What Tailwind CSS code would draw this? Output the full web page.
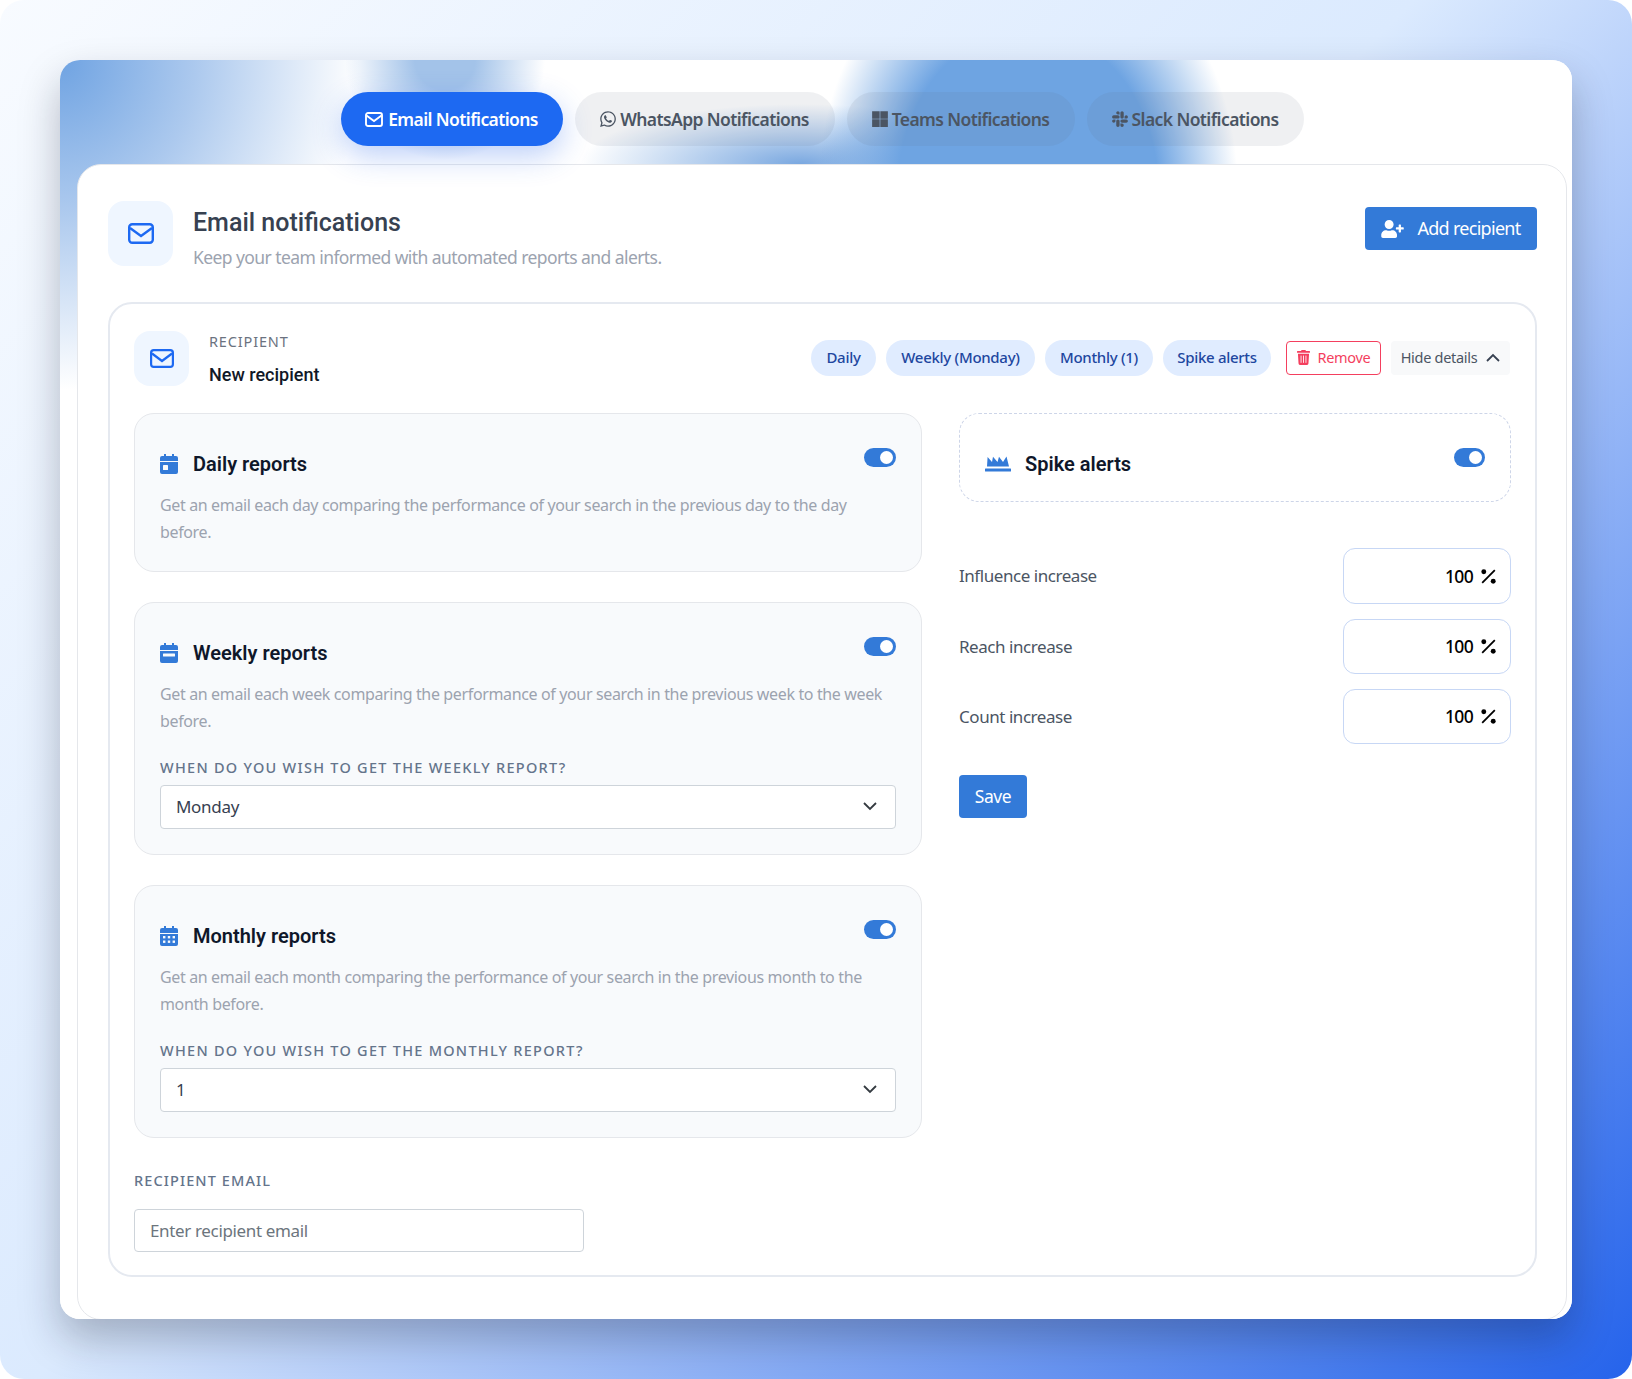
<!DOCTYPE html>
<html lang="en">
<head>
    <meta charset="UTF-8">
    <title>Email notifications</title>
    <script src="https://cdn.jsdelivr.net/npm/@tailwindcss/browser@4"></script>
</head>
<body class="bg-white font-['Noto_Sans',sans-serif] antialiased">
<div class="w-[1632px] h-[1379px] rounded-[24px] bg-[linear-gradient(135deg,#f8fbff_0%,#dbeafe_47%,#2563eb_100%)] p-[60px] pr-[60px]">

    <!-- Outer card -->
    <div class="relative w-[1512px] h-[1259px] rounded-[20px] bg-[#fbfbfb] overflow-hidden shadow-[0_20px_40px_rgba(15,23,42,0.28)] pl-[17px] pr-[5px] pt-[32px]">
        <!-- Header glow -->
        <div class="absolute inset-0 bg-[radial-gradient(ellipse_210px_260px_at_968px_130px,#6ea4e2_0%,#6ea4e2_62%,transparent_100%),radial-gradient(ellipse_220px_60px_at_740px_104px,#7aa8e0_0%,transparent_100%),radial-gradient(ellipse_100px_100px_at_385px_0px,#a3c3e9_0%,#a3c3e9_30%,transparent_100%),radial-gradient(ellipse_300px_330px_at_0px_0px,#6fa3e2_0%,#acc9ee_45%,transparent_100%),linear-gradient(#ffffff,#ffffff)]"></div>

        <!-- Tabs -->
        <div class="relative z-10 flex justify-center gap-[12px] h-[54px] text-[17.5px] font-semibold tracking-[-0.6px]">
            <div class="flex items-center gap-[5px] w-[222px] justify-center rounded-full bg-[#1d69f2] text-white shadow-[0_10px_30px_rgba(37,99,235,0.3)]">
                <svg class="w-[18px] h-[15px]" viewBox="0 0 18 15" fill="none" stroke="currentColor" stroke-width="1.9"><rect x="1" y="1" width="16" height="13" rx="2"/><path d="M1.5 3.5 9 9l7.5-5.5"/></svg>
                Email Notifications
            </div>
            <div class="flex items-center gap-[4px] w-[260px] justify-center rounded-full bg-[rgba(100,110,130,0.1)] text-[#4b5563]">
                <svg class="w-[16px] h-[18px]" viewBox="0 0 448 512" fill="currentColor"><path d="M380.9 97.1C339 55.1 283.2 32 223.9 32c-122.4 0-222 99.6-222 222 0 39.1 10.2 77.3 29.6 111L0 480l117.7-30.9c32.4 17.7 68.9 27 106.1 27h.1c122.3 0 224.1-99.6 224.1-222 0-59.3-25.2-115-67.1-157zm-157 341.6c-33.2 0-65.7-8.9-94-25.7l-6.7-4-69.8 18.3L72 359.2l-4.4-7c-18.5-29.4-28.2-63.3-28.2-98.2 0-101.7 82.8-184.5 184.6-184.5 49.3 0 95.6 19.2 130.4 54.1 34.8 34.9 56.2 81.2 56.1 130.5 0 101.8-84.9 184.6-186.6 184.6zm101.2-138.2c-5.5-2.8-32.8-16.2-37.9-18-5.1-1.9-8.8-2.8-12.5 2.8-3.7 5.6-14.3 18-17.6 21.8-3.2 3.7-6.5 4.2-12 1.4-32.6-16.3-54-29.1-75.5-66-5.7-9.8 5.7-9.1 16.3-30.3 1.8-3.7.9-6.9-.5-9.7-1.4-2.8-12.5-30.1-17.1-41.2-4.5-10.8-9.1-9.3-12.5-9.5-3.2-.2-6.9-.2-10.6-.2-3.7 0-9.7 1.4-14.8 6.9-5.1 5.6-19.4 19-19.4 46.3 0 27.3 19.9 53.7 22.6 57.4 2.8 3.7 39.1 59.7 94.8 83.8 35.2 15.2 49 16.5 66.6 13.9 10.7-1.6 32.8-13.4 37.4-26.4 4.6-13 4.6-24.1 3.2-26.4-1.3-2.5-5-3.9-10.5-6.6z"/></svg>
                WhatsApp Notifications
            </div>
            <div class="flex items-center gap-[4px] w-[228px] justify-center rounded-full bg-[rgba(100,110,130,0.1)] text-[#4b5563]">
                <svg class="w-[16px] h-[18px]" viewBox="0 0 448 512" fill="currentColor"><path d="M0 32h214.6v214.6H0V32zm233.4 0H448v214.6H233.4V32zM0 265.4h214.6V480H0V265.4zm233.4 0H448V480H233.4V265.4z"/></svg>
                Teams Notifications
            </div>
            <div class="flex items-center gap-[4px] w-[217px] justify-center rounded-full bg-[rgba(100,110,130,0.1)] text-[#4b5563]">
                <svg class="w-[16px] h-[18px]" viewBox="0 0 448 512" fill="currentColor"><path d="M94.12 315.1c0 25.9-21.16 47.06-47.06 47.06S0 341 0 315.1c0-25.9 21.16-47.06 47.06-47.06h47.06v47.06zm23.72 0c0-25.9 21.16-47.06 47.06-47.06s47.06 21.16 47.06 47.06v117.84c0 25.9-21.16 47.06-47.06 47.06s-47.06-21.16-47.06-47.06V315.1zm47.06-188.98c-25.9 0-47.06-21.16-47.06-47.06S139 32 164.9 32s47.06 21.16 47.06 47.06v47.06H164.9zm0 23.72c25.9 0 47.06 21.16 47.06 47.06s-21.16 47.06-47.06 47.06H47.06C21.16 243.96 0 222.8 0 196.9s21.16-47.06 47.06-47.06H164.9zm188.98 47.06c0-25.9 21.16-47.06 47.06-47.06 25.9 0 47.06 21.16 47.06 47.06s-21.16 47.06-47.06 47.06h-47.06V196.9zm-23.72 0c0 25.9-21.16 47.06-47.06 47.06-25.9 0-47.06-21.16-47.06-47.06V79.06c0-25.9 21.16-47.06 47.06-47.06 25.9 0 47.06 21.16 47.06 47.06V196.9zM283.1 385.88c25.9 0 47.06 21.16 47.06 47.06 0 25.9-21.16 47.06-47.06 47.06-25.9 0-47.06-21.16-47.06-47.06v-47.06h47.06zm0-23.72c-25.9 0-47.06-21.16-47.06-47.06 0-25.9 21.16-47.06 47.06-47.06h117.84c25.9 0 47.06 21.16 47.06 47.06 0 25.9-21.16 47.06-47.06 47.06H283.1z"/></svg>
                Slack Notifications
            </div>
        </div>

        <!-- Inner card -->
        <div class="relative mt-[18px] h-[1156px] rounded-[24px] bg-white border border-[#e5e7eb] pt-[36px] pl-[30px] pr-[29px]">

            <!-- Page header -->
            <div class="flex justify-between h-[65px]">
                <div class="flex gap-[20px]">
                    <div class="w-[65px] h-[65px] rounded-[16px] bg-[#eff6ff] flex items-center justify-center text-[#1d69f2]">
                        <svg class="w-[26px] h-[21px]" viewBox="0 0 26 21" fill="none" stroke="currentColor" stroke-width="2.4"><rect x="1.2" y="1.2" width="23.6" height="18.6" rx="3"/><path d="M2 5l11 8 11-8"/></svg>
                    </div>
                    <div>
                        <h1 class="font-['Roboto',sans-serif] text-[25px] leading-[34px] font-medium text-[#374151] mt-[5px]">Email notifications</h1>
                        <p class="text-[17.5px] leading-[26px] text-[#9ca3af] mt-[4px] tracking-[-0.58px]">Keep your team informed with automated reports and alerts.</p>
                    </div>
                </div>
                <button class="mt-[6px] w-[172px] h-[43px] rounded-[4px] bg-[#337ad8] text-white text-[18px] tracking-[-0.7px] flex items-center justify-center gap-[13px]">
                    <svg class="w-[23px] h-[18px]" viewBox="0 0 640 512" fill="currentColor"><path d="M624 208h-64v-64c0-8.8-7.2-16-16-16h-32c-8.8 0-16 7.2-16 16v64h-64c-8.8 0-16 7.2-16 16v32c0 8.8 7.2 16 16 16h64v64c0 8.8 7.2 16 16 16h32c8.8 0 16-7.2 16-16v-64h64c8.8 0 16-7.2 16-16v-32c0-8.8-7.2-16-16-16zm-400 48c70.7 0 128-57.3 128-128S294.7 0 224 0 96 57.3 96 128s57.3 128 128 128zm89.6 32h-16.7c-22.2 10.2-46.9 16-72.9 16s-50.6-5.8-72.9-16h-16.7C60.2 288 0 348.2 0 422.4V464c0 26.5 21.5 48 48 48h352c26.5 0 48-21.5 48-48v-41.6c0-74.2-60.2-134.4-134.4-134.4z"/></svg>
                    Add recipient
                </button>
            </div>

            <!-- Recipient card -->
            <div class="mt-[36px] h-[975px] rounded-[24px] border-2 border-[#e5e9f0] bg-white pt-[27px] pl-[24px] pr-[24px]">
                <div class="flex justify-between h-[55px]">
                    <div class="flex gap-[20px]">
                        <div class="w-[55px] h-[55px] rounded-[16px] bg-[#eff6ff] flex items-center justify-center text-[#1d69f2]">
                            <svg class="w-[24px] h-[19px]" viewBox="0 0 24 19" fill="none" stroke="currentColor" stroke-width="2.2"><rect x="1.1" y="1.1" width="21.8" height="16.8" rx="2.6"/><path d="M2 4.5l10 7.5 10-7.5"/></svg>
                        </div>
                        <div>
                            <div class="text-[14.5px] leading-[20px] tracking-[0.85px] text-[#6b7280]">RECIPIENT</div>
                            <div class="font-['Roboto',sans-serif] text-[18px] leading-[24px] font-medium text-[#111827] mt-[12px]">New recipient</div>
                        </div>
                    </div>
                    <div class="flex items-center h-[55px] mt-[-1px] mr-[1px] text-[15px] tracking-[-0.3px]">
                        <div class="flex items-center justify-center w-[65px] h-[36px] rounded-full bg-[#e0ecff] text-[#1e47a0] font-medium">Daily</div>
                        <div class="flex items-center justify-center w-[149px] h-[36px] rounded-full bg-[#e0ecff] text-[#1e47a0] font-medium ml-[10px]">Weekly (Monday)</div>
                        <div class="flex items-center justify-center w-[108px] h-[36px] rounded-full bg-[#e0ecff] text-[#1e47a0] font-medium ml-[10px]">Monthly (1)</div>
                        <div class="flex items-center justify-center w-[108px] h-[36px] rounded-full bg-[#e0ecff] text-[#1e47a0] font-medium ml-[10px]">Spike alerts</div>
                        <div class="flex items-center justify-center gap-[8px] w-[95px] h-[34px] rounded-[4px] border border-[#f43f5e] text-[#f43f5e] text-[14.5px] ml-[15px]">
                            <svg class="w-[13px] h-[15px]" viewBox="0 0 448 512" fill="currentColor"><path d="M432 32H312l-9.4-18.7A24 24 0 0 0 281.1 0H166.8a23.72 23.72 0 0 0-21.4 13.3L136 32H16A16 16 0 0 0 0 48v32a16 16 0 0 0 16 16h416a16 16 0 0 0 16-16V48a16 16 0 0 0-16-16zM53.2 467a48 48 0 0 0 47.9 45h245.8a48 48 0 0 0 47.9-45L416 128H32z"/><path d="M140 190v250M224 190v250M308 190v250" stroke="#fff" stroke-width="30"/></svg>
                            Remove
                        </div>
                        <div class="flex items-center justify-center gap-[9px] w-[119px] h-[34px] rounded-[4px] bg-[#f8f9fa] text-[#4b5563] text-[14.5px] ml-[10px]">
                            Hide details
                            <svg class="w-[14px] h-[9px]" viewBox="0 0 14 9" fill="none" stroke="#374151" stroke-width="1.8"><path d="M1 8l6-6 6 6"/></svg>
                        </div>
                    </div>
                </div>

                <div class="grid grid-cols-[788px_552px] gap-x-[37px] mt-[27px]">
                    <!-- Left column -->
                    <div class="flex flex-col gap-[30px]">
                        <!-- Daily -->
                        <div class="rounded-[20px] border border-[#e5e7eb] bg-[#f8fafc] px-[25px] pt-[34px] pb-[25px]">
                            <div class="flex justify-between h-[32px]">
                                <div class="flex items-center gap-[15px]">
                                    <svg class="w-[18px] h-[20px] text-[#337ad8]" viewBox="0 0 18 20" fill="currentColor"><path d="M4 0h2v3H4zM12 0h2v3h-2z"/><path d="M2 2h14a2 2 0 0 1 2 2v3H0V4a2 2 0 0 1 2-2zM0 8h18v10a2 2 0 0 1-2 2H2a2 2 0 0 1-2-2z"/><rect x="3" y="11" width="5" height="5" rx=".6" fill="#f8fafc"/></svg>
                                    <h3 class="font-['Roboto',sans-serif] text-[20px] font-semibold text-[#0f172a]">Daily reports</h3>
                                </div>
                                <div class="relative w-[32px] h-[19px] rounded-full bg-[#337ad8]"><span class="absolute right-[3px] top-[3px] w-[13px] h-[13px] rounded-full bg-white"></span></div>
                            </div>
                            <p class="mt-[12px] mb-[1px] text-[16px] leading-[26.5px] text-[#9ca3af] tracking-[-0.36px]">Get an email each day comparing the performance of your search in the previous day to the day<br>before.</p>
                        </div>
                        <!-- Weekly -->
                        <div class="rounded-[20px] border border-[#e5e7eb] bg-[#f8fafc] px-[25px] pt-[34px] pb-[25px]">
                            <div class="flex justify-between h-[32px]">
                                <div class="flex items-center gap-[15px]">
                                    <svg class="w-[18px] h-[20px] text-[#337ad8]" viewBox="0 0 18 20" fill="currentColor"><path d="M4 0h2v3H4zM12 0h2v3h-2z"/><path d="M2 2h14a2 2 0 0 1 2 2v3H0V4a2 2 0 0 1 2-2zM0 8h18v10a2 2 0 0 1-2 2H2a2 2 0 0 1-2-2z"/><rect x="3" y="10.5" width="12" height="3" rx=".5" fill="#f8fafc"/></svg>
                                    <h3 class="font-['Roboto',sans-serif] text-[20px] font-semibold text-[#0f172a]">Weekly reports</h3>
                                </div>
                                <div class="relative w-[32px] h-[19px] rounded-full bg-[#337ad8]"><span class="absolute right-[3px] top-[3px] w-[13px] h-[13px] rounded-full bg-white"></span></div>
                            </div>
                            <p class="mt-[12px] text-[16px] leading-[26.5px] text-[#9ca3af] tracking-[-0.36px]">Get an email each week comparing the performance of your search in the previous week to the week<br>before.</p>
                            <div class="mt-[23px] text-[14.5px] leading-[20px] font-medium tracking-[1.27px] text-[#64748b]">WHEN DO YOU WISH TO GET THE WEEKLY REPORT?</div>
                            <div class="relative mt-[8px] h-[44px] rounded-[4px] border border-[#ced4da] bg-white flex items-center pl-[15px] text-[17px] text-[#374151] tracking-[-0.3px]">
                                Monday
                                <svg class="absolute right-[18px] top-[16px] w-[14px] h-[9px]" viewBox="0 0 14 9" fill="none" stroke="#343a40" stroke-width="1.8"><path d="M1 1l6 6 6-6"/></svg>
                            </div>
                        </div>
                        <!-- Monthly -->
                        <div class="rounded-[20px] border border-[#e5e7eb] bg-[#f8fafc] px-[25px] pt-[34px] pb-[25px]">
                            <div class="flex justify-between h-[32px]">
                                <div class="flex items-center gap-[15px]">
                                    <svg class="w-[18px] h-[20px] text-[#337ad8]" viewBox="0 0 18 20" fill="currentColor"><path d="M4 0h2v3H4zM12 0h2v3h-2z"/><path d="M2 2h14a2 2 0 0 1 2 2v3H0V4a2 2 0 0 1 2-2zM0 8h18v10a2 2 0 0 1-2 2H2a2 2 0 0 1-2-2z"/><g fill="#f8fafc"><rect x="3" y="10" width="2.4" height="2.4"/><rect x="7.8" y="10" width="2.4" height="2.4"/><rect x="12.6" y="10" width="2.4" height="2.4"/><rect x="3" y="14.5" width="2.4" height="2.4"/><rect x="7.8" y="14.5" width="2.4" height="2.4"/><rect x="12.6" y="14.5" width="2.4" height="2.4"/></g></svg>
                                    <h3 class="font-['Roboto',sans-serif] text-[20px] font-semibold text-[#0f172a]">Monthly reports</h3>
                                </div>
                                <div class="relative w-[32px] h-[19px] rounded-full bg-[#337ad8]"><span class="absolute right-[3px] top-[3px] w-[13px] h-[13px] rounded-full bg-white"></span></div>
                            </div>
                            <p class="mt-[12px] text-[16px] leading-[26.5px] text-[#9ca3af] tracking-[-0.36px]">Get an email each month comparing the performance of your search in the previous month to the<br>month before.</p>
                            <div class="mt-[23px] text-[14.5px] leading-[20px] font-medium tracking-[1.27px] text-[#64748b]">WHEN DO YOU WISH TO GET THE MONTHLY REPORT?</div>
                            <div class="relative mt-[8px] h-[44px] rounded-[4px] border border-[#ced4da] bg-white flex items-center pl-[15px] text-[17px] text-[#374151]">
                                1
                                <svg class="absolute right-[18px] top-[16px] w-[14px] h-[9px]" viewBox="0 0 14 9" fill="none" stroke="#343a40" stroke-width="1.8"><path d="M1 1l6 6 6-6"/></svg>
                            </div>
                        </div>
                        <!-- Recipient email -->
                        <div class="mt-[2px]">
                            <div class="text-[14.5px] leading-[20px] font-medium tracking-[1.1px] text-[#64748b]">RECIPIENT EMAIL</div>
                            <div class="mt-[19px] w-[450px] h-[43px] rounded-[4px] border border-[#ced4da] bg-white flex items-center pl-[15px] text-[17px] text-[#6c757d] tracking-[-0.35px]">Enter recipient email</div>
                        </div>
                    </div>

                    <!-- Right column -->
                    <div>
                        <div class="h-[89px] rounded-[20px] border border-dashed border-[#cdd5e8] px-[25px] pt-[34px] flex justify-between">
                            <div class="flex items-center gap-[14px] h-[32px]">
                                <svg class="w-[26px] h-[16px] text-[#337ad8]" viewBox="0 0 26 16" fill="currentColor"><path d="M2 10.5 2.6 1 7 6l1-5.2L12.5 6 14 .8 18 6l3.5-5.5L24 10.5z"/><rect x="0" y="12.5" width="26" height="3" rx=".5"/></svg>
                                <h3 class="font-['Roboto',sans-serif] text-[20px] font-semibold text-[#0f172a]">Spike alerts</h3>
                            </div>
                            <div class="relative w-[31px] h-[19px] rounded-full bg-[#337ad8]"><span class="absolute right-[3px] top-[3px] w-[13px] h-[13px] rounded-full bg-white"></span></div>
                        </div>
                        <div class="mt-[46px] flex flex-col gap-[15px]">
                            <div class="flex items-center justify-between">
                                <span class="text-[17px] text-[#4b5563] tracking-[-0.45px]">Influence increase</span>
                                <div class="w-[168px] h-[56px] rounded-[12px] border border-[#c7d7f5] flex items-center justify-end gap-[8px] pr-[14px] text-[17.5px] font-medium tracking-[-0.7px] text-black">100
                                    <svg class="w-[15px] h-[15px]" viewBox="0 0 14 14" fill="currentColor"><circle cx="2.6" cy="2.6" r="2.3"/><circle cx="11.4" cy="11.4" r="2.3"/><path d="M.5 12.3 12.3.5l1.2 1.2L1.7 13.5z"/></svg>
                                </div>
                            </div>
                            <div class="flex items-center justify-between">
                                <span class="text-[17px] text-[#4b5563] tracking-[-0.45px]">Reach increase</span>
                                <div class="w-[168px] h-[55px] rounded-[12px] border border-[#c7d7f5] flex items-center justify-end gap-[8px] pr-[14px] text-[17.5px] font-medium tracking-[-0.7px] text-black">100
                                    <svg class="w-[15px] h-[15px]" viewBox="0 0 14 14" fill="currentColor"><circle cx="2.6" cy="2.6" r="2.3"/><circle cx="11.4" cy="11.4" r="2.3"/><path d="M.5 12.3 12.3.5l1.2 1.2L1.7 13.5z"/></svg>
                                </div>
                            </div>
                            <div class="flex items-center justify-between">
                                <span class="text-[17px] text-[#4b5563] tracking-[-0.45px]">Count increase</span>
                                <div class="w-[168px] h-[55px] rounded-[12px] border border-[#c7d7f5] flex items-center justify-end gap-[8px] pr-[14px] text-[17.5px] font-medium tracking-[-0.7px] text-black">100
                                    <svg class="w-[15px] h-[15px]" viewBox="0 0 14 14" fill="currentColor"><circle cx="2.6" cy="2.6" r="2.3"/><circle cx="11.4" cy="11.4" r="2.3"/><path d="M.5 12.3 12.3.5l1.2 1.2L1.7 13.5z"/></svg>
                                </div>
                            </div>
                        </div>
                        <button class="mt-[31px] w-[68px] h-[43px] rounded-[4px] bg-[#337ad8] text-white text-[17.5px] tracking-[-0.4px]">Save</button>
                    </div>
                </div>
            </div>
        </div>
    </div>
</div>
</body>
</html>
